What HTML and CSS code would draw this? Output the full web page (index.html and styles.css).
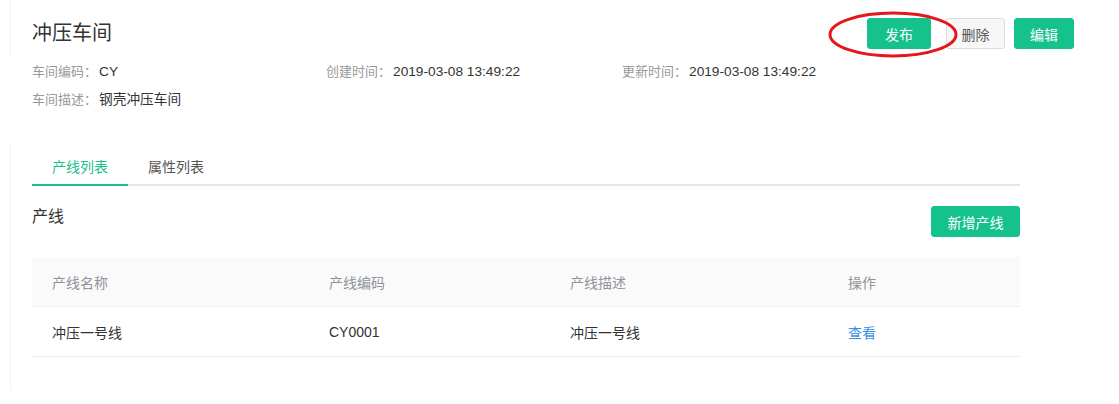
FILE: index.html
```
<!DOCTYPE html>
<html>
  <head>
    <meta charset="UTF-8" />
    <title>冲压车间</title>
    <link rel="stylesheet" href="styles.css">
  </head>
  <body>
    <div class="page">
      <div class="head">
        <h1 class="title">冲压车间</h1>
        <div class="actions">
          <button class="btn btn-green">发布</button>
          <button class="btn btn-plain">删除</button>
          <button class="btn btn-green">编辑</button>
        </div>
      </div>
      <div class="meta">
        <div class="meta-item"><span class="label">车间编码：</span><span class="value">CY</span></div>
        <div class="meta-item"><span class="label">创建时间：</span><span class="value">2019-03-08 13:49:22</span></div>
        <div class="meta-item"><span class="label">更新时间：</span><span class="value">2019-03-08 13:49:22</span></div>
        <div class="meta-item"><span class="label">车间描述：</span><span class="value">钢壳冲压车间</span></div>
      </div>

      <div class="card">
        <div class="tabs">
          <div class="tab active">产线列表</div>
          <div class="tab">属性列表</div>
        </div>
        <div class="section-head">
          <h2 class="section-title">产线</h2>
          <button class="btn btn-green btn-add">新增产线</button>
        </div>
        <div class="table">
          <div class="row thead">
            <div class="cell">产线名称</div>
            <div class="cell">产线编码</div>
            <div class="cell">产线描述</div>
            <div class="cell">操作</div>
          </div>
          <div class="row">
            <div class="cell">冲压一号线</div>
            <div class="cell">CY0001</div>
            <div class="cell">冲压一号线</div>
            <div class="cell"><a class="link" href="#">查看</a></div>
          </div>
        </div>
      </div>

      <!-- red marker drawn over the publish button -->
      <svg class="marker" width="132" height="48" viewBox="0 0 132 48">
        <ellipse cx="65" cy="23.5" rx="63" ry="21.5" fill="none" stroke="#e5161d" stroke-width="3" />
      </svg>
    </div>
  </body>
</html>
```

FILE: styles.css
```
body {
  margin: 0;
  font-family: "Liberation Sans", "Noto Sans CJK SC", sans-serif;
  color: #333;
  background: #fff;
}

.page {
  position: relative;
  width: 1119px;
  height: 404px;
}

.head {
  display: flex;
  justify-content: space-between;
  align-items: center;
  margin-left: 10px;
  padding: 18px 45px 8px 21px;
  border-left: 1px solid #f4f4f4;
}

.title {
  margin: 0;
  font-size: 20px;
  font-weight: normal;
  line-height: 31px;
  color: #333;
}

.actions {
  display: flex;
}

.btn {
  height: 31px;
  padding: 0;
  font-family: inherit;
  font-size: 14px;
  border-radius: 3px;
  cursor: pointer;
}

.btn-green {
  background: #15c28c;
  border: 1px solid #15c28c;
  color: #fff;
}

.btn-plain {
  background: #f7f7f7;
  border: 1px solid #dcdcdc;
  color: #555;
}

.actions .btn:nth-child(1) {
  width: 64px;
}

.actions .btn:nth-child(2) {
  width: 59px;
  margin-left: 15px;
}

.actions .btn:nth-child(3) {
  width: 60px;
  margin-left: 9px;
}

.meta {
  display: grid;
  grid-template-columns: 294px 296px 1fr;
  padding-left: 32px;
  margin-top: 1px;
  font-size: 13px;
  line-height: 28px;
  color: #333;
}

.label {
  color: #999;
}

.value {
  margin-left: 2px;
  font-size: 13.7px;
}

.card {
  margin: 29px 0 0 10px;
  width: 1009px;
  padding: 7px 0 34px 21px;
  border-left: 1px solid #f4f4f4;
  box-sizing: border-box;
}

.tabs {
  display: flex;
  width: 988px;
  border-bottom: 2px solid #e4e7ed;
}

.tab {
  padding: 0 20px;
  line-height: 34px;
  font-size: 14px;
  color: #555;
  margin-bottom: -2px;
  border-bottom: 2px solid transparent;
}

.tab.active {
  color: #1bbf8c;
  border-bottom-color: #1bbf8c;
}

.section-head {
  display: flex;
  justify-content: space-between;
  align-items: flex-start;
  width: 988px;
  margin-top: 20px;
}

.section-title {
  margin: 0;
  font-size: 16px;
  font-weight: normal;
  line-height: 22px;
  color: #333;
}

.btn-add {
  width: 89px;
}

.table {
  width: 988px;
  margin-top: 20px;
  font-size: 14px;
}

.row {
  display: grid;
  grid-template-columns: 277px 241px 278px 1fr;
  height: 50px;
  align-items: center;
  border-bottom: 1px solid #ebeef5;
  box-sizing: border-box;
}

.thead {
  background: #fafafa;
  color: #909399;
}

.cell {
  padding-left: 20px;
}

.link {
  color: #3a8ee6;
  text-decoration: none;
}

.marker {
  position: absolute;
  left: 828px;
  top: 11px;
}
```
